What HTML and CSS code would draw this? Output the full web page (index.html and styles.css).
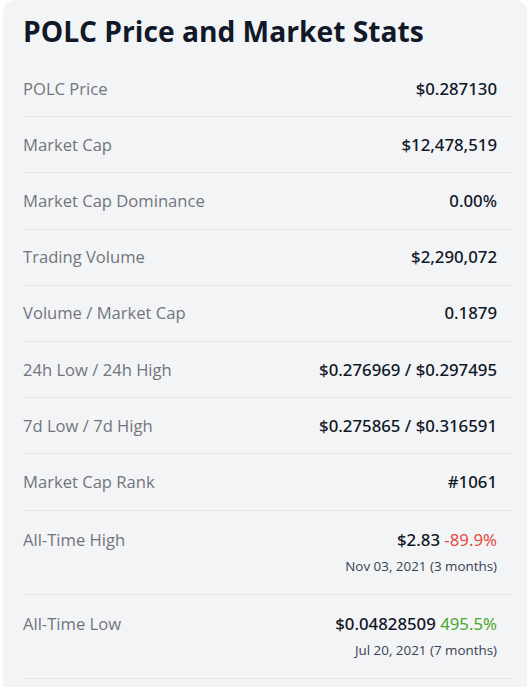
FILE: index.html
```html
<!DOCTYPE html>
<html lang="en">
<head>
<meta charset="utf-8">
<title>POLC Price and Market Stats</title>
<link rel="stylesheet" href="styles.css">
</head>
<body>
<section class="card">
  <h2 class="title">POLC Price and Market Stats</h2>
  <div class="table">
    <div class="row"><span class="label">POLC Price</span><span class="value">$0.287130</span></div>
    <div class="row"><span class="label">Market Cap</span><span class="value">$12,478,519</span></div>
    <div class="row"><span class="label">Market Cap Dominance</span><span class="value">0.00%</span></div>
    <div class="row"><span class="label">Trading Volume</span><span class="value">$2,290,072</span></div>
    <div class="row"><span class="label">Volume / Market Cap</span><span class="value">0.1879</span></div>
    <div class="row"><span class="label">24h Low / 24h High</span><span class="value">$0.276969 / $0.297495</span></div>
    <div class="row"><span class="label">7d Low / 7d High</span><span class="value">$0.275865 / $0.316591</span></div>
    <div class="row"><span class="label">Market Cap Rank</span><span class="value">#1061</span></div>
    <div class="row row-tall">
      <span class="label">All-Time High</span>
      <div class="value-stack">
        <span class="value">$2.83 <span class="down">-89.9%</span></span>
        <span class="sub">Nov 03, 2021 (3 months)</span>
      </div>
    </div>
    <div class="row row-tall">
      <span class="label">All-Time Low</span>
      <div class="value-stack">
        <span class="value">$0.04828509 <span class="up">495.5%</span></span>
        <span class="sub">Jul 20, 2021 (7 months)</span>
      </div>
    </div>
  </div>
</section>
</body>
</html>
```

FILE: styles.css
```css
html, body {
  margin: 0;
  padding: 0;
  background: #ffffff;
}
body {
  padding: 0 4px 0 3px;
  font-family: "Open Sans", "Noto Sans", sans-serif;
  height: 687px;
  overflow: hidden;
}
.card {
  background: #f3f4f6;
  border-radius: 12px;
  padding: 11px 15px 20px 20px;
  min-height: 720px;
}
.title {
  margin: 0 0 10px 0;
  font-size: 28.2px;
  line-height: 40px;
  font-weight: 700;
  color: #111827;
}
.row {
  display: flex;
  justify-content: space-between;
  align-items: center;
  padding: 15.6px 15px 15.6px 0;
  border-bottom: 1px solid #e3e5e8;
  line-height: 24px;
}
.row-tall {
  align-items: flex-start;
  padding-top: 17px;
  padding-bottom: 18px;
}
.label {
  font-size: 16.6px;
  color: #71757d;
}
.value {
  font-family: "Noto Sans", "Open Sans", sans-serif;
  font-size: 16.8px;
  font-weight: 500;
  color: #111827;
}
.value-stack {
  display: flex;
  flex-direction: column;
  align-items: flex-end;
}
.down { color: #e2493f; font-weight: 400; }
.up { color: #4aa82d; font-weight: 400; }
.sub {
  margin-top: 4px;
  font-size: 13.4px;
  line-height: 20px;
  color: #374151;
}
```
